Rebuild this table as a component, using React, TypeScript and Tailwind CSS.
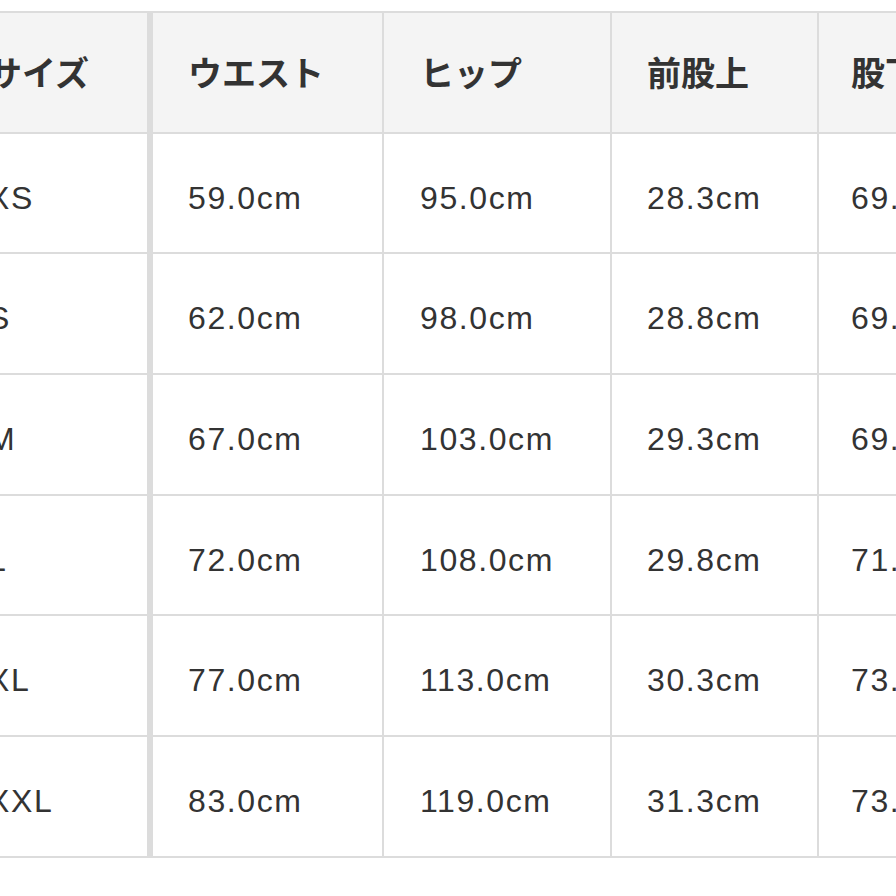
import React from "react";

const header = ["サイズ", "ウエスト", "ヒップ", "前股上", "股下"];
const rows = [
  ["XS", "59.0cm", "95.0cm", "28.3cm", "69.5cm"],
  ["S", "62.0cm", "98.0cm", "28.8cm", "69.5cm"],
  ["M", "67.0cm", "103.0cm", "29.3cm", "69.5cm"],
  ["L", "72.0cm", "108.0cm", "29.8cm", "71.5cm"],
  ["XL", "77.0cm", "113.0cm", "30.3cm", "73.5cm"],
  ["XXL", "83.0cm", "119.0cm", "31.3cm", "73.5cm"],
];

const colCls = [
  "w-[201px] shrink-0 border-r-[6px] border-[#dcdcdc] pl-[36px]",
  "w-[231px] shrink-0 border-r-2 border-[#dcdcdc] pl-[35px]",
  "w-[228px] shrink-0 border-r-2 border-[#dcdcdc] pl-[36px]",
  "w-[207px] shrink-0 border-r-2 border-[#dcdcdc] pl-[35px]",
  "w-[240px] shrink-0 pl-[32px]",
];

function Row({ cells, head }: { cells: string[]; head?: boolean }) {
  return (
    <div
      className={`flex h-[120.7px] border-b-2 border-[#dcdcdc] ${
        head ? "bg-[#f4f4f4]" : "bg-white"
      }`}
    >
      {cells.map((c, i) => (
        <div
          key={i}
          className={`${colCls[i]} flex items-center whitespace-nowrap ${
            head
              ? "pt-[4px] text-[34px] font-bold"
              : "pt-[9px] text-[32px] tracking-[1.6px]"
          }`}
        >
          {c}
        </div>
      ))}
    </div>
  );
}

export default function App() {
  return (
    <div
      className="w-[896px] h-[896px] overflow-hidden bg-white pt-[11px] text-[#333333]"
      style={{ fontFamily: '"Liberation Sans", "Noto Sans CJK JP", sans-serif' }}
    >
      <div className="ml-[-48px] w-[1200px] border-t-2 border-[#dcdcdc]">
        <Row cells={header} head />
        {rows.map((r, i) => (
          <Row key={i} cells={r} />
        ))}
      </div>
    </div>
  );
}
